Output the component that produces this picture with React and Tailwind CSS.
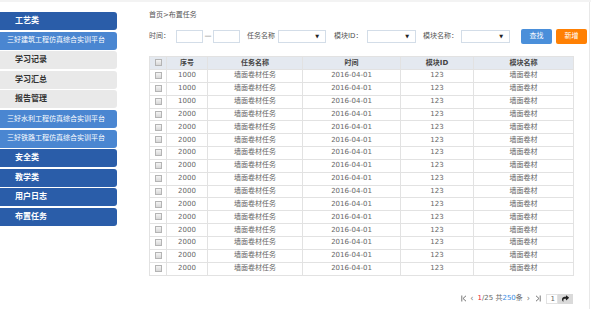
import React from 'react';
import { FaShare } from 'react-icons/fa';

const NAV = [
  { t: '工艺类', k: 'main' },
  { t: '三好建筑工程仿真综合实训平台', k: 'plat' },
  { t: '学习记录', k: 'sub' },
  { t: '学习汇总', k: 'sub' },
  { t: '报告管理', k: 'sub' },
  { t: '三好水利工程仿真综合实训平台', k: 'plat' },
  { t: '三好铁路工程仿真综合实训平台', k: 'plat' },
  { t: '安全类', k: 'main' },
  { t: '教学类', k: 'main' },
  { t: '用户日志', k: 'main' },
  { t: '布置任务', k: 'main' },
];

const ROWS = [1000, 1000, 1000, 2000, 2000, 2000, 2000, 2000, 2000, 2000, 2000, 2000, 2000, 2000, 2000, 2000];

const font = { fontFamily: '"DejaVu Sans", "Noto Sans CJK SC", sans-serif' };

const Box = () => (
  <span className="inline-block w-[7px] h-[7px] border border-[#b4b4b4] bg-gradient-to-b from-[#f4f4f4] to-[#d8d8d8] align-middle" />
);

const Select = ({ w }) => (
  <div className={`${w} h-[13px] border border-[#d3dde8] bg-white flex items-center justify-end pr-[6px]`}>
    <span className="text-[5px] leading-none text-[#222]">▼</span>
  </div>
);

const Sidebar = () => (
  <div className="w-[117px] pt-[10px] flex flex-col gap-[1.6px] shrink-0">
    {NAV.map((n, i) => (
      <div
        key={i}
        className={`h-[18px] flex items-center rounded-r-[3px] ${
          n.k === 'main'
            ? 'bg-[#2a5da9] text-white font-bold text-[8px] pl-[15px]'
            : n.k === 'plat'
            ? 'bg-[#4a86d1] text-white text-[7px] pl-[7px]'
            : 'bg-[#e9e9e9] text-[#333] font-bold text-[8px] pl-[15px]'
        }`}
      >
        {n.t}
      </div>
    ))}
  </div>
);

const COLS = ['w-[17px]', 'w-[41px]', 'w-[95px]', 'w-[98px]', 'w-[73px]', 'w-[100px]'];

const FirstIcon = ({ flip }) => (
  <svg width="6" height="7" viewBox="0 0 6 7" className={flip ? 'scale-x-[-1]' : ''}>
    <path d="M0.8 0.5V6.5" stroke="#777" strokeWidth="1" />
    <path d="M5 0.8L2 3.5L5 6.2" stroke="#777" strokeWidth="1" fill="none" />
  </svg>
);

export default function App() {
  return (
    <div style={font} className="w-[591px] h-[309px] bg-white border-t-2 border-[#f3f3f3] overflow-hidden">
      <div className="w-[590px] h-full border-r border-[#e8e8e8] flex">
        <Sidebar />
        <div className="pl-[32px] pt-[9px] flex-1">
          <div className="text-[7px] leading-[9px] text-[#555] h-[9px]">首页&gt;布置任务</div>
          <div className="mt-[9px] h-[15px] flex items-center text-[7px] text-[#555]">
            <span className="w-[27px]">时间：</span>
            <div className="w-[27px] h-[13px] border border-[#d3dde8]" />
            <span className="w-[10px] text-center text-[#666]">—</span>
            <div className="w-[27px] h-[13px] border border-[#d3dde8]" />
            <span className="ml-[7px] w-[31px]">任务名称</span>
            <Select w="w-[48px]" />
            <span className="ml-[8px] w-[33px]">模块ID：</span>
            <Select w="w-[49px]" />
            <span className="ml-[7px] w-[38px]">模块名称：</span>
            <Select w="w-[49px]" />
            <button className="ml-[11px] w-[31px] h-[15px] rounded-[2px] bg-[#4a8fda] text-white text-[7px]">查找</button>
            <button className="ml-[4px] w-[31px] h-[15px] rounded-[2px] bg-[#ff8003] text-white text-[7px]">新增</button>
          </div>

          <table className="mt-[12px] w-[424px] border-collapse border border-[#e2e2e2] text-[7px] text-[#666] table-fixed">
            <thead>
              <tr className="h-[13px] bg-[#e4e9f0] text-[#444]">
                {['', '序号', '任务名称', '时间', '模块ID', '模块名称'].map((h, i) => (
                  <th key={i} className={`${COLS[i]} border border-[#e2e2e2] font-bold p-0 leading-none`}>
                    {i === 0 ? <Box /> : h}
                  </th>
                ))}
              </tr>
            </thead>
            <tbody>
              {ROWS.map((r, i) => (
                <tr key={i} className="h-[12.85px]">
                  <td className="border border-[#e2e2e2] text-center p-0 leading-none"><Box /></td>
                  <td className="border border-[#e2e2e2] text-center p-0 leading-none">{r}</td>
                  <td className="border border-[#e2e2e2] text-center p-0 leading-none">墙面卷材任务</td>
                  <td className="border border-[#e2e2e2] text-center p-0 leading-none">2016-04-01</td>
                  <td className="border border-[#e2e2e2] text-center p-0 leading-none">123</td>
                  <td className="border border-[#e2e2e2] text-center p-0 leading-none">墙面卷材</td>
                </tr>
              ))}
            </tbody>
          </table>

          <div className="mt-[18px] w-[424px] flex justify-end items-center h-[10px] text-[7px] text-[#666]">
            <FirstIcon />
            <span className="ml-[3px] text-[8px] text-[#777]">‹</span>
            <span className="ml-[4px]">
              <span className="text-[#e23]">1</span>/25 共<span className="text-[#3a8ee6]">250</span>条
            </span>
            <span className="ml-[4px] text-[8px] text-[#777]">›</span>
            <span className="ml-[5px]"><FirstIcon flip /></span>
            <div className="ml-[5px] w-[12px] h-[10px] border border-[#e2e2e2] text-right pr-[2px] leading-[9px]">1</div>
            <div className="w-[15px] h-[10px] bg-[#dadada] flex items-center justify-center">
              <FaShare className="w-[7px] h-[7px] text-[#222]" />
            </div>
          </div>
        </div>
      </div>
    </div>
  );
}
